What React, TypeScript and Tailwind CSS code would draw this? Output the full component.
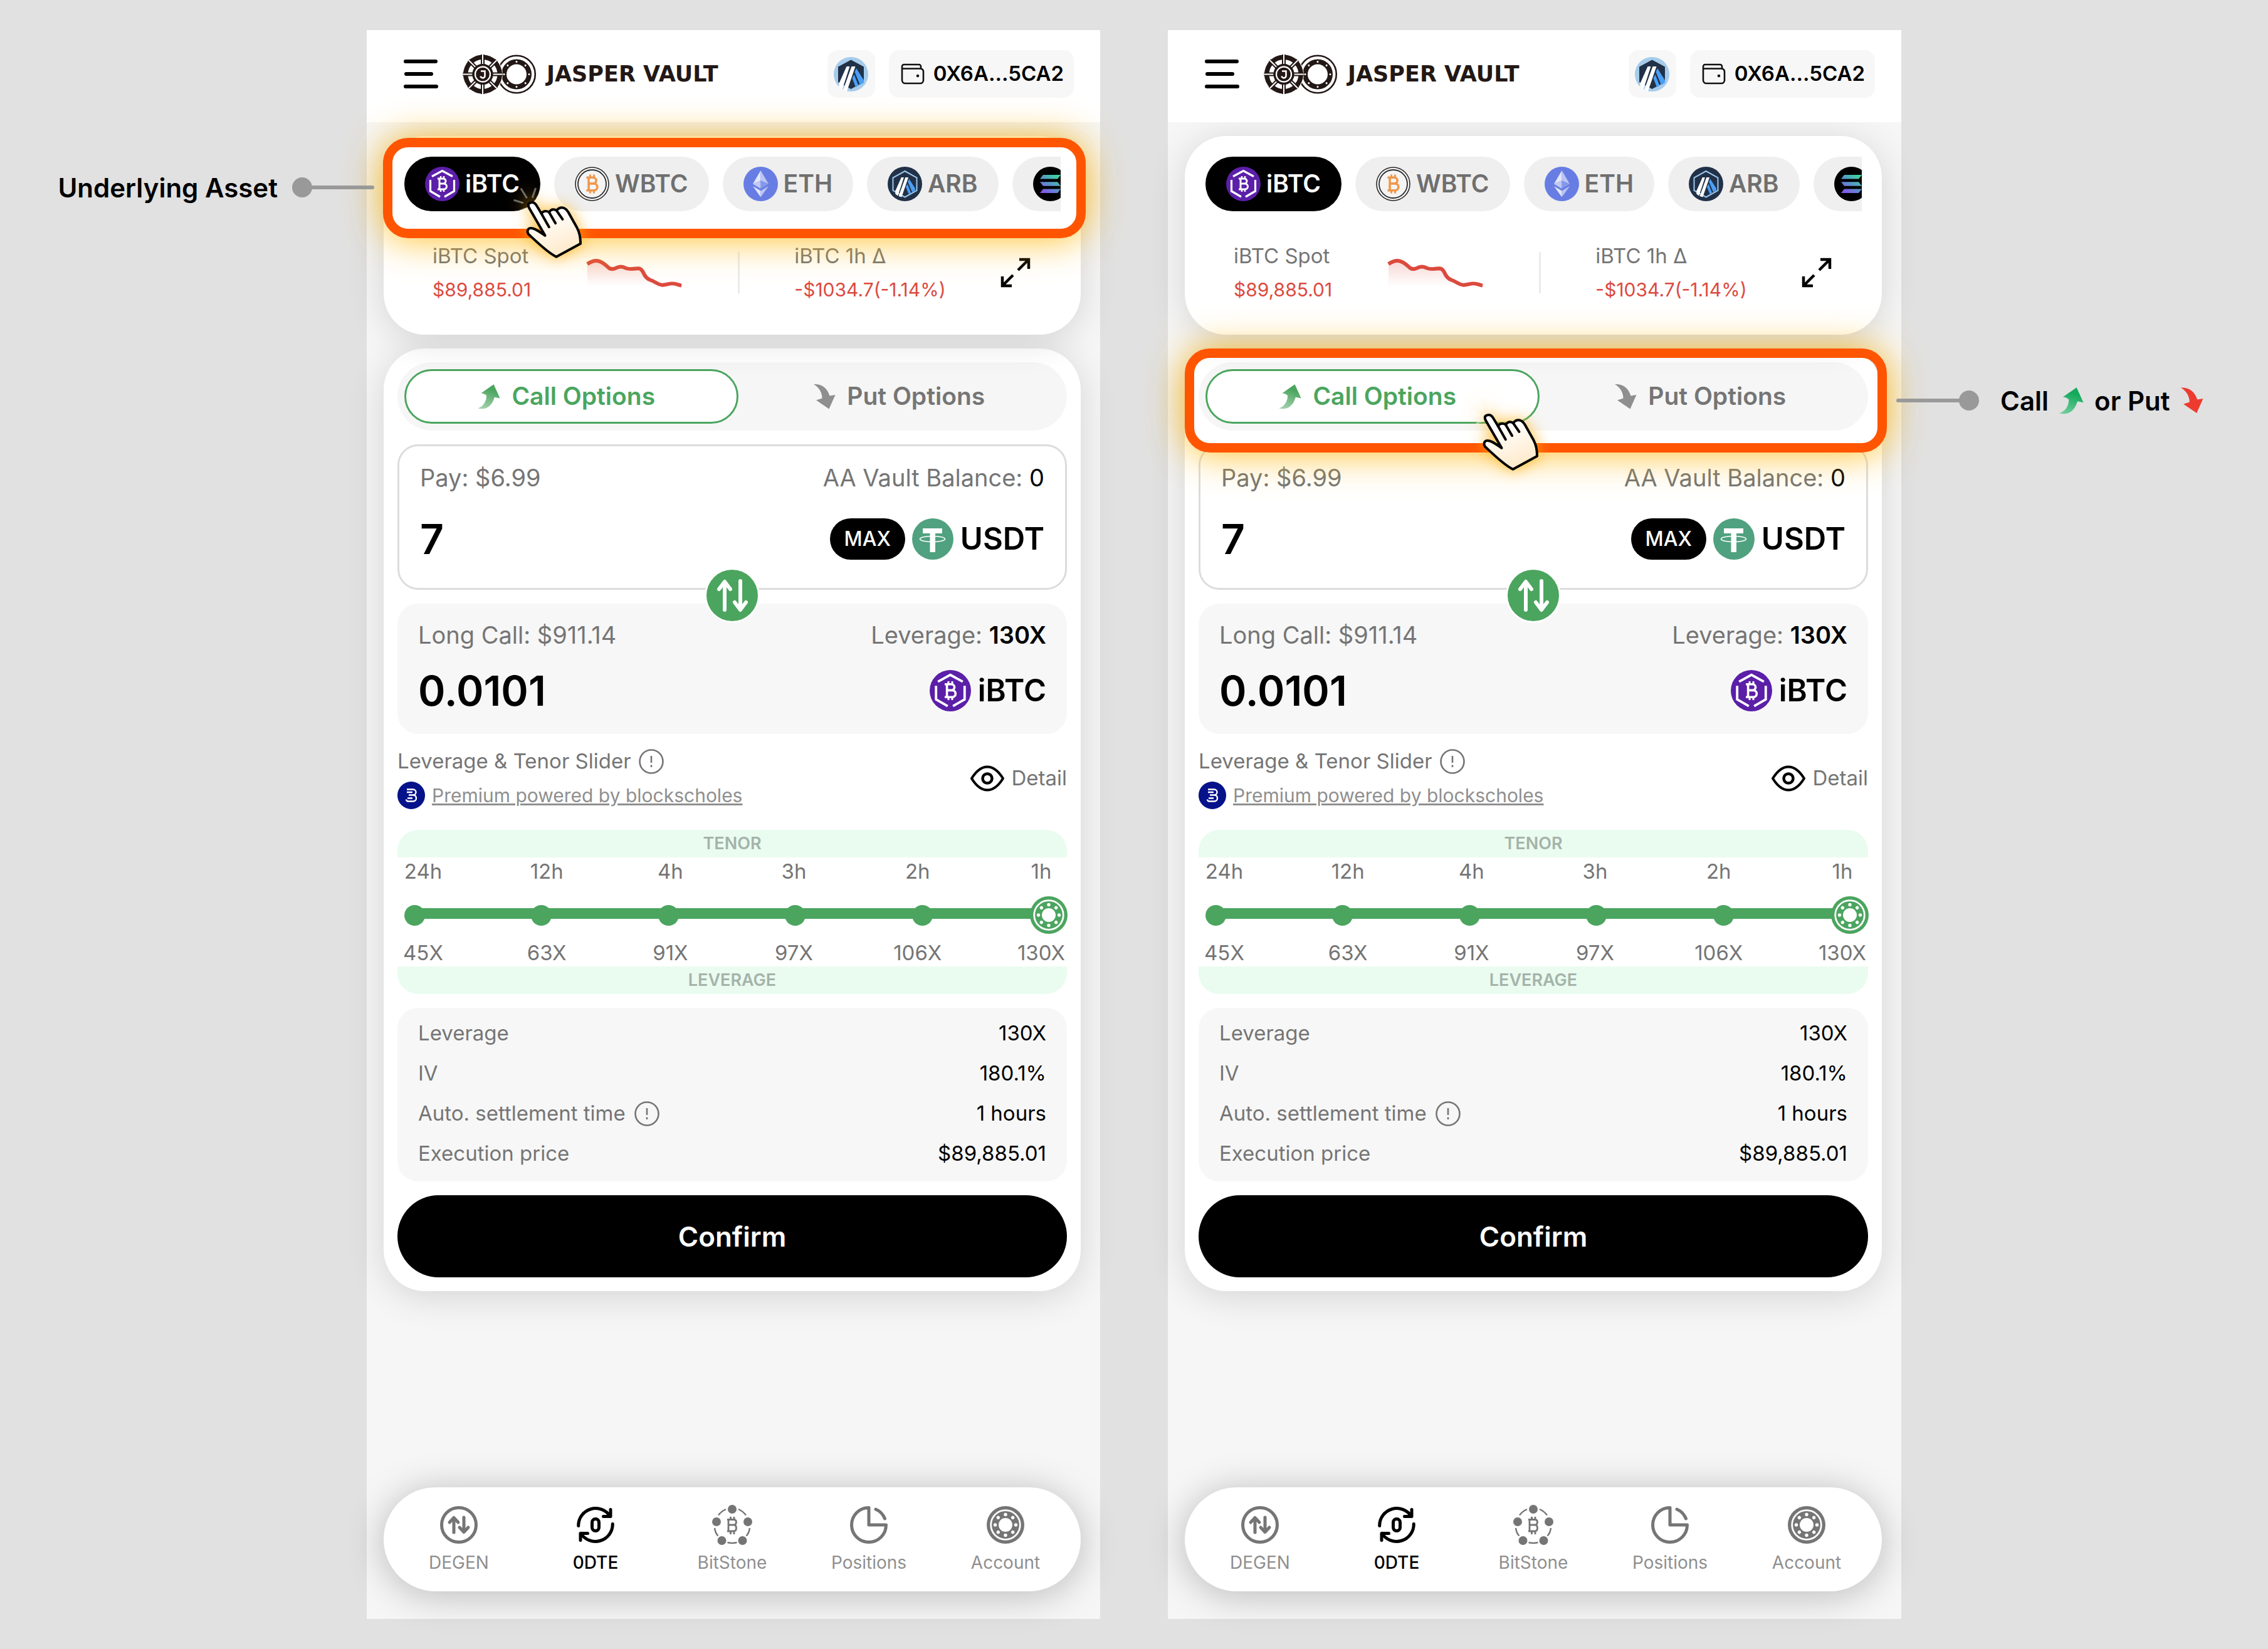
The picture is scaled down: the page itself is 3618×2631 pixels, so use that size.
import { useId, useState } from 'react'
import type { ReactNode } from 'react'

type Step = 'asset' | 'direction'

const tenors = [
  { time: '24h', leverage: '45X' },
  { time: '12h', leverage: '63X' },
  { time: '4h', leverage: '91X' },
  { time: '3h', leverage: '97X' },
  { time: '2h', leverage: '106X' },
  { time: '1h', leverage: '130X' }
]

/* ---------- token icons ---------- */

function BitcoinMark({ color }: { color: string }) {
  return (
    <g fill="none" stroke={color} strokeWidth={3} strokeLinejoin="round">
      <path d="M20 19h9a4 4 0 0 1 0 8h-6h7a4.500 4.500 0 0 1 0 9H20M23 19v17" />
      <path d="M25 15v4M30 15v4M25 36v4M30 36v4" strokeWidth={2.500} />
    </g>
  )
}

function IbtcIcon({ className }: { className: string }) {
  return (
    <svg viewBox="0 0 55 55" className={className} aria-hidden="true">
      <circle cx="27.5" cy="27.5" r="27.5" fill="#5b1fa8" />
      <path d="M11 15.500L27.500 6.500L44 15.500M8.500 21v18L24 48M46.500 21v18L31 48" fill="none" stroke="#fff" strokeWidth={3.200} />
      <BitcoinMark color="#fff" />
    </svg>
  )
}

function WbtcIcon({ className }: { className: string }) {
  return (
    <svg viewBox="0 0 55 55" className={className} aria-hidden="true">
      <circle cx="27.5" cy="27.5" r="26.5" fill="#f4f4f4" stroke="#2b2b2b" strokeWidth={1.600} />
      <circle cx="27.5" cy="27.5" r="22.5" fill="#f4f4f4" stroke="#2b2b2b" strokeWidth={1.800} />
      <g transform="translate(-5.500 -5.500) scale(1.200)">
        <BitcoinMark color="#f0984c" />
      </g>
    </svg>
  )
}

function EthIcon({ className }: { className: string }) {
  return (
    <svg viewBox="0 0 55 55" className={className} aria-hidden="true">
      <circle cx="27.5" cy="27.5" r="27.5" fill="#687de3" />
      <path d="M27.500 6L15 27.500L27.500 22Z" fill="#e3e7fb" />
      <path d="M27.500 6L40 27.500L27.500 22Z" fill="#bcc6f4" />
      <path d="M27.500 22L15 27.500L27.500 35Z" fill="#c0c9f5" />
      <path d="M27.500 22L40 27.500L27.500 35Z" fill="#8798e9" />
      <path d="M15 31L27.500 38.500V48.500Z" fill="#e3e7fb" />
      <path d="M40 31L27.500 38.500V48.500Z" fill="#bcc6f4" />
    </svg>
  )
}

function ArbStripes() {
  return (
    <>
      <path d="M20.500 15H25.500L13.500 52L8.500 48V42Z" fill="#fff" />
      <path d="M28.500 15H34.500L21 54.500L15 52.500Z" fill="#fff" />
      <path d="M36 18L48 37V41L42 44.500L33.500 24Z" fill="#4a9ff5" />
      <path d="M32.500 28L39.500 45.500L35 48L29.500 34Z" fill="#4a9ff5" />
    </>
  )
}

function ArbBadge({ className }: { className: string }) {
  return (
    <svg viewBox="0 0 55 55" className={className} aria-hidden="true">
      <circle cx="27.5" cy="27.5" r="27.5" fill="#a6cbeb" />
      <path d="M27.500 4.500L48 15.500V40L27.500 51L7 40V15.500Z" fill="#213147" />
      <ArbStripes />
    </svg>
  )
}

function ArbIcon({ className }: { className: string }) {
  return (
    <svg viewBox="0 0 55 55" className={className} aria-hidden="true">
      <circle cx="27.5" cy="27.5" r="27.5" fill="#213147" />
      <path d="M27.500 7L46.500 17.500V38L27.500 48.500L8.500 38V17.500Z" fill="none" stroke="#9dc6ea" strokeWidth={2} />
      <g transform="translate(5.500 5) scale(.8)">
        <ArbStripes />
      </g>
    </svg>
  )
}

function SolIcon({ className }: { className: string }) {
  const id = useId()
  return (
    <svg viewBox="0 0 55 55" className={className} aria-hidden="true">
      <linearGradient id={id} x1="0.1" y1="1" x2="0.9" y2="0">
        <stop offset="0" stopColor="#8a4df0" />
        <stop offset="0.5" stopColor="#5795c8" />
        <stop offset="1" stopColor="#3ddc97" />
      </linearGradient>
      <circle cx="27.5" cy="27.5" r="27.5" fill="#000" />
      <path d="M16 13H44L39 19.500H11ZM11 24.300H39L44 30.800H16ZM16 35.500H44L39 42H11Z" fill={`url(#${id})`} />
    </svg>
  )
}

function TetherIcon({ className }: { className: string }) {
  return (
    <svg viewBox="0 0 66 66" className={className} aria-hidden="true">
      <circle cx="33" cy="33" r="33" fill="#50a17f" />
      <path d="M17 16H48V24H37V54H28.500V24H17Z" fill="#fff" />
      <ellipse cx="32.5" cy="33" rx="20" ry="4.5" fill="none" stroke="#fff" strokeWidth={1.600} />
    </svg>
  )
}

/* ---------- interface icons ---------- */

function MenuIcon() {
  return (
    <svg viewBox="0 0 56 46" className="h-[46px] w-14" fill="none" stroke="#000" strokeWidth={6} strokeLinecap="round" aria-hidden="true">
      <path d="M3 3H51M4 23H44M3 43H52" />
    </svg>
  )
}

function VaultLogo() {
  const angles = [0, 45, 90, 135, 180, 225, 270, 315]
  return (
    <svg viewBox="0 0 118 63" className="h-[63px] w-[118px]" aria-hidden="true">
      <circle cx="86" cy="31.5" r="29.8" fill="#fff" stroke="#231815" strokeWidth={2.600} />
      <circle cx="86" cy="31.5" r="20" fill="none" stroke="#231815" strokeWidth={8} />
      {angles.map((a) => (
        <circle key={a} cx="86" cy="11.5" r="1.5" fill="#fff" transform={`rotate(${a} 86 31.5)`} />
      ))}
      <circle cx="32" cy="31.5" r="32" fill="#fff" />
      <circle cx="32" cy="31.5" r="31" fill="#231815" />
      <circle cx="32" cy="31.5" r="20" fill="none" stroke="#fff" strokeWidth={7} />
      {angles.map((a) => (
        <g key={a} transform={`rotate(${a} 32 31.5)`}>
          <path d="M32 0V16" stroke="#231815" strokeWidth={6} />
          <path d="M32 0V15" stroke="#fff" strokeWidth={2} />
        </g>
      ))}
      <circle cx="32" cy="31.5" r="12" fill="#231815" stroke="#fff" strokeWidth={2.400} />
      <circle cx="32" cy="31.5" r="15" fill="none" stroke="#231815" strokeWidth={3} />
      <path d="M29 26.500H35.500V33a3.500 3.500 0 0 1-7 1.500" fill="none" stroke="#fff" strokeWidth={2.600} />
    </svg>
  )
}

function WalletIcon() {
  return (
    <svg viewBox="0 0 38 34" className="h-[34px] w-[38px]" fill="none" stroke="#111" strokeWidth={2.600} aria-hidden="true">
      <path d="M2 9V27a5 5 0 0 0 5 5H31a5 5 0 0 0 5-5V13a5 5 0 0 0-4-4.500H2V5a3 3 0 0 1 3-3H29a3 3 0 0 1 3 3V8.500" />
      <circle cx="27" cy="20" r="1.6" fill="#111" stroke="none" />
      <circle cx="27" cy="20" r="1" />
    </svg>
  )
}

function Sparkline() {
  const id = useId()
  return (
    <svg viewBox="110 170 465 145" className="h-12 w-[155px]" fill="none" aria-hidden="true">
      <linearGradient id={id} x1="0" y1="0" x2="0" y2="1">
        <stop offset="0" stopColor="#dc4a3e" stopOpacity={0.220} />
        <stop offset="1" stopColor="#dc4a3e" stopOpacity={0} />
      </linearGradient>
      <path d="M114 201Q145 180 170 188Q195 195 215 215Q232 232 255 220Q280 205 305 222Q335 228 360 222Q375 222 383 240Q400 275 425 280Q450 295 475 302V310H114Z" fill={`url(#${id})`} />
      <path
        d="M114 201C135 187 155 183 170 187C192 194 205 208 217 219C228 227 240 226 252 220C270 210 285 212 300 221C318 229 335 223 360 222C372 222 378 230 384 242C392 262 402 272 418 278C440 285 452 300 475 302C495 303 508 294 525 295C543 295 552 302 568 305"
        stroke="#dc4a3e"
        strokeWidth={18}
      />
    </svg>
  )
}

function ExpandIcon() {
  return (
    <svg viewBox="0 0 48 48" className="size-12" fill="none" stroke="#000" strokeWidth={4.500} aria-hidden="true">
      <path d="M28 20L45 3M30 3H45V18M20 28L3 45M3 30V45H18" />
    </svg>
  )
}

function RiseIcon({ from, to, className }: { from: string; to: string; className: string }) {
  const id = useId()
  return (
    <svg viewBox="404 152 110 122" className={className} aria-hidden="true">
      <linearGradient id={id} x1="0.6" y1="0" x2="0.3" y2="1">
        <stop offset="0.2" stopColor={from} />
        <stop offset="1" stopColor={to} />
      </linearGradient>
      <path d="M482 153L513 221L486 215C476 250 455 272 425 272Q412 272 405 269C430 262 448 235 447 207Q434 195 420 196Z" fill={`url(#${id})`} />
    </svg>
  )
}

function FallIcon({ color, className }: { color: string; className: string }) {
  return (
    <svg viewBox="0 0 35 40" className={className} aria-hidden="true">
      <path d="M0 0Q19 -1 25.500 18.500L34.500 17L24.500 39.500L4 25.500L13.500 22.500Q13 8 0 0Z" fill={color} />
    </svg>
  )
}

function SwapIcon() {
  return (
    <svg viewBox="0 0 82 82" className="size-[82px]" fill="none" stroke="#fff" strokeWidth={6} strokeLinecap="round" strokeLinejoin="round" aria-hidden="true">
      <path d="M29 64V20M20 31L29 19L38 31M54 18V62M45 52L54 64L63 52" />
    </svg>
  )
}

function InfoIcon() {
  return (
    <svg viewBox="0 0 40 40" className="size-10" fill="none" stroke="#757575" strokeWidth={2.600} aria-hidden="true">
      <circle cx="20" cy="20" r="18.5" />
      <path d="M20 11V22M20 25.500V29" />
    </svg>
  )
}

function EyeIcon() {
  return (
    <svg viewBox="0 0 54 42" className="h-[42px] w-[54px]" fill="none" stroke="#000" aria-hidden="true">
      <path d="M2 21C10 8 18 2.500 27 2.500S44 8 52 21C44 34 36 39.500 27 39.500S10 34 2 21Z" strokeWidth={4} strokeLinejoin="round" />
      <circle cx="27" cy="21" r="7.5" strokeWidth={4.500} />
    </svg>
  )
}

function BlockScholesIcon() {
  return (
    <svg viewBox="0 0 44 44" className="size-11" fill="none" stroke="#fff" strokeWidth={2.400} aria-hidden="true">
      <circle cx="22" cy="22" r="22" fill="#06128a" stroke="none" />
      <path d="M15 12.500H25a4.500 4.500 0 0 1 0 9H19M15 17H24M18 21.500H25a5 5 0 0 1 0 10H17a3 3 0 0 1-3-3M16 26.500H24" />
    </svg>
  )
}

function DialIcon({ color }: { color: string }) {
  return (
    <svg viewBox="0 0 60 60" className="size-[60px] shrink-0" aria-hidden="true">
      <circle cx="30" cy="30" r="30" fill={color} />
      <circle cx="30" cy="30" r="23.3" fill={color} stroke="#fff" strokeWidth={2.800} />
      <circle cx="30" cy="30" r="11" fill="#fff" />
      {[0, 45, 90, 135, 180, 225, 270, 315].map((a) => (
        <circle key={a} cx="30" cy="13.5" r="2.7" fill="#fff" transform={`rotate(${a} 30 30)`} />
      ))}
    </svg>
  )
}

function NavGlyph({ children }: { children: ReactNode }) {
  return (
    <svg viewBox="0 0 60 60" className="size-[60px] overflow-visible" fill="none" stroke="currentColor" strokeWidth={5} strokeLinecap="round" strokeLinejoin="round" aria-hidden="true">
      {children}
    </svg>
  )
}

const navItems = [
  {
    label: 'DEGEN',
    icon: (
      <NavGlyph>
        <circle cx="30" cy="30" r="27.5" />
        <path d="M22 42V19M15 26L22 18.500L29 26M38 18V41M31 34L38 41.500L45 34" />
      </NavGlyph>
    )
  },
  {
    label: '0DTE',
    icon: (
      <NavGlyph>
        <path d="M2.700 31.500A27.500 27.500 0 0 1 53.500 16.500M42.500 16.500H54V5.500" />
        <path d="M57.300 28.500A27.500 27.500 0 0 1 6.500 43.500M17.500 43.500H6V54.500" />
        <rect x="24.500" y="20.500" width="11" height="19" rx="5.500" />
      </NavGlyph>
    )
  },
  {
    label: 'BitStone',
    icon: (
      <NavGlyph>
        <g fill="currentColor" stroke="none">
          <circle cx="30" cy="5" r="7" />
          <circle cx="5" cy="25" r="7" />
          <circle cx="55" cy="25" r="7" />
          <circle cx="13.5" cy="55" r="7" />
          <circle cx="46.500" cy="55" r="7" />
        </g>
        <g strokeWidth={2.400} strokeLinecap="butt">
          <path d="M8 14.500Q13 8 20 5M40 5Q47 8 52 14.500M2 35Q3 43 7.500 47.500M58 35Q57 43 52.500 47.500M22.500 58Q30 60 37.500 58" />
        </g>
        <g strokeWidth={2.800} strokeLinecap="butt">
          <path d="M22 21.500H33Q36.500 22 36.500 25.500T33 30H24H33Q36.500 30.500 36.500 35T33 40H22M24 21.500V40M27.500 17V22M33 17V22M27.500 40V45M33 40V45" />
        </g>
      </NavGlyph>
    )
  },
  {
    label: 'Positions',
    icon: (
      <NavGlyph>
        <path d="M30 2.500V30H57.500A27.500 27.500 0 1 1 30 2.500Z" />
        <path d="M41 5A27.500 27.500 0 0 1 55.500 20" />
      </NavGlyph>
    )
  },
  { label: 'Account', icon: <DialIcon color="#757575" /> }
]

function Pointer() {
  const id = useId()
  return (
    <svg viewBox="500 660 400 400" className="size-[133px] overflow-visible drop-shadow-[0_0_12px_rgba(255,176,20,0.85)]" aria-hidden="true">
      <linearGradient id={id} x1="0.3" y1="0.2" x2="0.6" y2="1">
        <stop offset="0" stopColor="#fff" />
        <stop offset="1" stopColor="#ffe9c9" />
      </linearGradient>
      <path d="M572 692L601 739M643 690L627 737M538 748L584 762M566 800L594 788" stroke="#fff" strokeOpacity={0.400} strokeWidth={9} fill="none" />
      <g stroke="#000" strokeWidth={12} strokeLinejoin="round" strokeLinecap="round">
        <path
          d="M688 918L611 785C602 766 612 760 624 759C636 758 641 764 646 772L670 812C680 800 694 798 707 806C718 790 732 790 743 798C756 782 770 782 781 787C790 791 794 797 799 805L842 882C854 905 858 925 858 957L742 1020C700 1000 650 950 608 911C600 900 604 886 615 883C630 880 645 888 688 918Z"
          fill={`url(#${id})`}
        />
        <path d="M670 812L707 877M707 806L738 859M743 798L772 840" fill="none" />
      </g>
    </svg>
  )
}

function Highlight({ className }: { className: string }) {
  return (
    <div
      className={`pointer-events-none absolute z-30 rounded-[40px] border-[15px] border-[#ff5500] shadow-[0_2px_60px_rgba(255,184,17,0.9)] ${className}`}
    />
  )
}

/* ---------- screen ---------- */

const assets = [
  { id: 'iBTC', label: 'iBTC', Icon: IbtcIcon },
  { id: 'WBTC', label: 'WBTC', Icon: WbtcIcon },
  { id: 'ETH', label: 'ETH', Icon: EthIcon },
  { id: 'ARB', label: 'ARB', Icon: ArbIcon },
  { id: 'SOL', label: '', Icon: SolIcon }
]

const summary = [
  { label: 'Leverage', value: '130X', info: false },
  { label: 'IV', value: '180.1%', info: false },
  { label: 'Auto. settlement time', value: '1 hours', info: true },
  { label: 'Execution price', value: '$89,885.01', info: false }
]

function TradeScreen({ step }: { step: Step }) {
  const [asset, setAsset] = useState('iBTC')
  const [side, setSide] = useState('call')
  const [amount, setAmount] = useState('7')
  const [tenor, setTenor] = useState(5)

  return (
    <section className="relative flex w-full max-w-[1170px] flex-col bg-[#f6f6f6]">
      <header className="relative z-20 flex items-start justify-between bg-white pt-8 pr-[42px] pb-[39px] pl-[59px]">
        <div className="flex h-[76px] items-center">
          <button type="button" aria-label="Menu">
            <MenuIcon />
          </button>
          <a href="#" className="ml-[38px] flex items-center gap-4">
            <VaultLogo />
            <span className="font-['DejaVu_Sans',sans-serif] text-[35px] leading-10 font-bold whitespace-nowrap text-[#231815]">JASPER VAULT</span>
          </a>
        </div>
        <div className="flex gap-[22px]">
          <button type="button" aria-label="Network" className="flex size-[76px] items-center justify-center rounded-2xl bg-[#f7f7f7]">
            <ArbBadge className="size-[55px]" />
          </button>
          <button type="button" className="flex h-[76px] items-center gap-3.5 rounded-2xl bg-[#f7f7f7] pr-4 pl-[19px] text-[33px] font-semibold whitespace-nowrap">
            <WalletIcon />
            0X6A...5CA2
          </button>
        </div>
      </header>

      <div className="relative mt-[22px] mr-[31px] ml-[27px]">
        <div className="relative z-10 rounded-[66px] bg-white pt-[33px] pb-[45px] shadow-[0_8px_60px_rgba(0,0,0,0.14)]">
          <div className="mr-8 ml-[33px] flex gap-[22px] overflow-hidden">
            {assets.map(({ id, label, Icon }) => (
              <button
                key={id}
                type="button"
                aria-label={id}
                onClick={() => setAsset(id)}
                className={`flex h-[87px] shrink-0 items-center gap-[9px] rounded-full px-[33px] text-[39px] font-semibold ${
                  asset === id ? 'bg-black text-white' : 'bg-[#efefef] text-[#6f6f6f]'
                }`}
              >
                <Icon className="size-[55px]" />
                {label}
              </button>
            ))}
          </div>

          <div className="mt-11 flex items-center justify-between pr-20 pl-[78px]">
            <div className="leading-[54px]">
              <p className="text-[33px] text-[#757575]">iBTC Spot</p>
              <p className="text-[30px] text-[#dc4a3e]">$89,885.01</p>
            </div>
            <Sparkline />
            <div className="h-[66px] w-[3px] bg-[#ebebeb]" />
            <div className="leading-[54px]">
              <p className="text-[33px] text-[#757575]">iBTC 1h Δ</p>
              <p className="text-[30px] text-[#dc4a3e]">-$1034.7(-1.14%)</p>
            </div>
            <button type="button" aria-label="Expand chart">
              <ExpandIcon />
            </button>
          </div>
        </div>
        {step === 'asset' && (
          <>
            <Highlight className="top-[3px] -right-2 -left-px h-40" />
            <div className="pointer-events-none absolute top-[73px] left-[195px] z-40">
              <Pointer />
            </div>
          </>
        )}
      </div>

      <main className="relative mt-[22px] mr-[31px] ml-[27px] rounded-[66px] bg-white p-[22px] shadow-[0_8px_60px_rgba(0,0,0,0.14)]">
        {step === 'direction' && (
          <>
            <Highlight className="top-0 -right-2 left-0 h-[166px]" />
            <div className="pointer-events-none absolute top-[73px] left-[443px] z-40">
              <Pointer />
            </div>
          </>
        )}

        <div className="flex rounded-full bg-[#f6f6f6] p-[11px] text-[39px] font-semibold">
          <button
            type="button"
            onClick={() => setSide('call')}
            className={`flex h-[87px] w-[51%] items-center justify-center gap-[18px] rounded-full border-[3px] pr-4 ${
              side === 'call' ? 'border-[#4ba55f] bg-white text-[#4ba55f]' : 'border-transparent text-[#757575]'
            }`}
          >
            <RiseIcon from="#4ba55f" to="#a3d1ad" className="h-10 w-9" />
            Call Options
          </button>
          <button
            type="button"
            onClick={() => setSide('put')}
            className={`flex h-[87px] flex-1 items-center justify-center gap-[18px] rounded-full border-[3px] ${
              side === 'put' ? 'border-[#4ba55f] bg-white text-[#4ba55f]' : 'border-transparent text-[#757575]'
            }`}
          >
            <FallIcon color="#8f8f8f" className="h-10 w-[35px]" />
            Put Options
          </button>
        </div>

        <div className="relative mt-[22px] rounded-[33px] border-[3px] border-[#dcdcdc] px-[33px] pt-[23px] pb-[45px]">
          <div className="flex justify-between text-[38px] leading-[54px] text-[#757575]">
            <label htmlFor={`pay-${step}`}>Pay: $6.99</label>
            <p>
              AA Vault Balance: <span className="text-black">0</span>
            </p>
          </div>
          <div className="mt-[38px] flex h-[66px] items-center justify-between">
            <input
              id={`pay-${step}`}
              value={amount}
              onChange={(e) => setAmount(e.target.value)}
              className="w-80 bg-transparent text-[66px] leading-[66px] font-semibold outline-none"
            />
            <div className="flex items-center gap-[11px]">
              <button type="button" className="h-[66px] rounded-full bg-black px-[23px] text-[32px] font-medium text-white">
                MAX
              </button>
              <TetherIcon className="size-[66px]" />
              <span className="text-[49px] font-semibold">USDT</span>
            </div>
          </div>
          <button
            type="button"
            aria-label="Swap"
            className="absolute -bottom-[53px] left-1/2 z-10 -translate-x-1/2 rounded-full bg-[#4ba55f] ring-3 ring-white"
          >
            <SwapIcon />
          </button>
        </div>

        <div className="mt-[22px] rounded-[33px] bg-[#f7f7f7] px-[33px] pt-[23px] pb-9">
          <div className="flex justify-between text-[38px] leading-[54px] text-[#757575]">
            <p>Long Call: $911.14</p>
            <p>
              Leverage: <span className="font-semibold text-black">130X</span>
            </p>
          </div>
          <div className="mt-[29px] flex h-[66px] items-center justify-between">
            <p className="text-[66px] font-semibold">0.0101</p>
            <div className="flex items-center gap-[11px]">
              <IbtcIcon className="size-[66px]" />
              <span className="text-[49px] font-semibold">iBTC</span>
            </div>
          </div>
        </div>

        <div className="mt-[22px] flex items-center justify-between text-[33px] text-[#757575]">
          <div>
            <div className="flex h-11 items-center gap-3">
              <label htmlFor={`tenor-${step}`}>Leverage &amp; Tenor Slider</label>
              <InfoIcon />
            </div>
            <div className="mt-2.5 flex h-11 items-center gap-[11px]">
              <BlockScholesIcon />
              <a href="#" className="text-[30px] text-[#8f8f8f] underline">
                Premium powered by blockscholes
              </a>
            </div>
          </div>
          <button type="button" className="flex items-center gap-[11px]">
            <EyeIcon />
            Detail
          </button>
        </div>

        <div className="mt-[33px] text-center text-[33px] leading-[44px] text-[#757575]">
          <p className="h-11 rounded-t-[33px] bg-[#eafcf0] text-[27px] leading-[44px] font-semibold text-[#a5b3aa]">TENOR</p>
          <div className="flex justify-between">
            {tenors.map((t) => (
              <span key={t.time} className="w-[82px]">{t.time}</span>
            ))}
          </div>
          <div className="relative flex h-[86px] items-center justify-between pt-2.5 pr-3 pl-[11px]">
            <div className="absolute top-[37px] right-7 left-7 h-[17px] bg-[#4ba55f]" />
            {tenors.map((t, i) => (
              <span key={t.time} className="relative flex size-[33px] items-center justify-center rounded-full bg-[#4ba55f]">
                {i === tenor && <DialIcon color="#4ba55f" />}
              </span>
            ))}
            <input
              id={`tenor-${step}`}
              type="range"
              min={0}
              max={5}
              value={tenor}
              onChange={(e) => setTenor(Number(e.target.value))}
              className="absolute inset-0 size-full cursor-pointer opacity-0"
            />
          </div>
          <div className="flex justify-between">
            {tenors.map((t) => (
              <span key={t.leverage} className="w-[82px]">{t.leverage}</span>
            ))}
          </div>
          <p className="h-11 rounded-b-[33px] bg-[#eafcf0] text-[27px] leading-[44px] font-semibold text-[#a5b3aa]">LEVERAGE</p>
        </div>

        <dl className="mt-[22px] rounded-[33px] bg-[#f7f7f7] px-[33px] pt-[9px] pb-3 text-[33px]">
          {summary.map((row) => (
            <div key={row.label} className="flex h-16 items-center justify-between">
              <dt className="flex items-center gap-3.5 text-[#757575]">
                {row.label}
                {row.info && <InfoIcon />}
              </dt>
              <dd>{row.value}</dd>
            </div>
          ))}
        </dl>

        <button type="button" className="mt-[22px] h-[131px] w-full rounded-full bg-black text-[44px] font-semibold text-white">
          Confirm
        </button>
      </main>

      <nav className="mt-auto mr-[31px] mb-11 ml-[27px] flex h-[166px] rounded-full bg-white px-[11px] pt-[30px] shadow-[0_6px_60px_rgba(0,0,0,0.25)]">
        {navItems.map((item) => (
          <a
            key={item.label}
            href="#"
            className={`flex flex-1 flex-col items-center gap-3 text-[28px] leading-9 ${
              item.label === '0DTE' ? 'font-medium text-black' : 'text-[#757575]'
            }`}
          >
            {item.icon}
            <span className={item.label === '0DTE' ? '' : 'text-[#8f8f8f]'}>{item.label}</span>
          </a>
        ))}
      </nav>
    </section>
  )
}

export default function App() {
  return (
    <div className="flex min-h-screen items-stretch bg-[#e1e1e1] py-12 font-['Inter',sans-serif] text-black">
      <aside className="relative z-40 -mr-3 flex flex-1 items-start justify-end pt-[221px]">
        <div className="flex h-[60px] items-center">
          <p className="mr-[23px] text-[42px] font-semibold whitespace-nowrap">Underlying Asset</p>
          <span className="size-8 rounded-full bg-[#999]" />
          <span className="-ml-1 h-1.5 w-[103px] rounded-full bg-[#999]" />
        </div>
      </aside>

      <TradeScreen step="asset" />
      <div className="w-[108px] shrink-0" />
      <TradeScreen step="direction" />

      <aside className="relative z-40 -ml-3 flex flex-1 items-start pt-[561px]">
        <div className="ml-1 flex h-[60px] items-center text-[42px] font-semibold whitespace-nowrap">
          <span className="-mr-1 h-1.5 w-[104px] rounded-full bg-[#999]" />
          <span className="size-8 rounded-full bg-[#999]" />
          <p className="ml-[34px] flex items-center gap-[17px]">
            Call
            <RiseIcon from="#12a95b" to="#6fcb9b" className="h-[43px] w-[39px]" />
            or Put
            <FallIcon color="#ee3b30" className="h-[42px] w-9" />
          </p>
        </div>
      </aside>
    </div>
  )
}
